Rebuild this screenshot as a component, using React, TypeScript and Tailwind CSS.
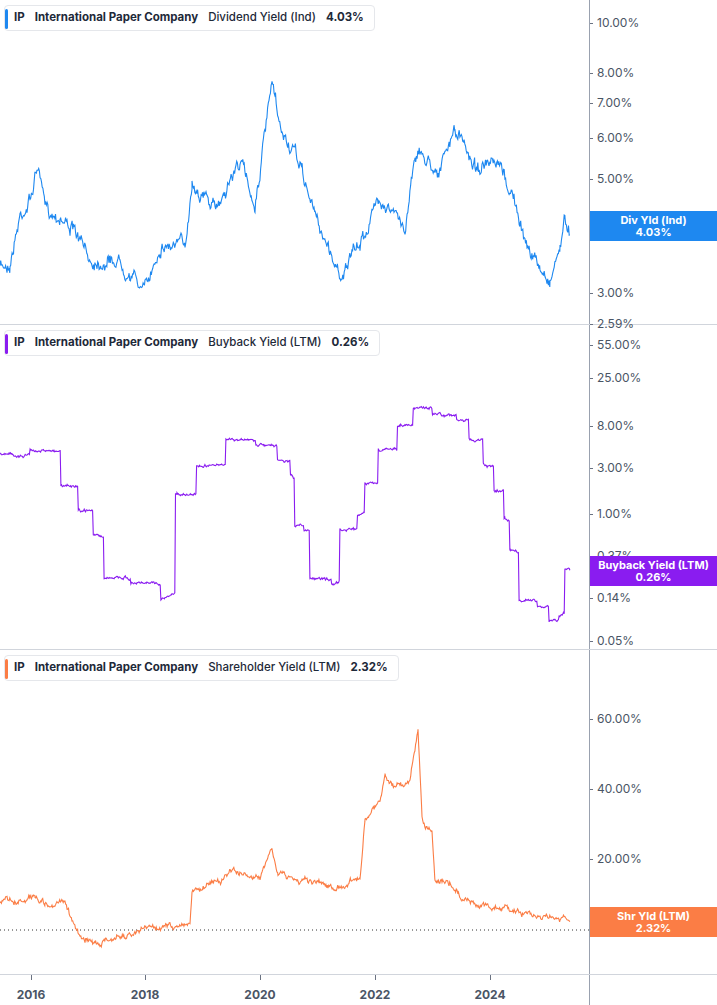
import React from "react";

function rng(seed: number) {
  let s = seed;
  return () => {
    s = (s * 16807) % 2147483647;
    return s / 2147483647;
  };
}

function buildPath(pts: number[][], off: number, noise: number, step: boolean, seed: number) {
  const r = rng(seed);
  const out: string[] = [];
  let first = true;
  let walk = 0;
  for (let i = 0; i < pts.length - 1; i++) {
    const [x0, y0] = pts[i];
    const [x1, y1] = pts[i + 1];
    for (let x = x0; x < x1; x += 0.7) {
      const t = (x - x0) / (x1 - x0);
      let y = step ? (t < 0.85 ? y0 + (y1 - y0) * 0.05 * t : y1) : y0 + (y1 - y0) * t;
      walk = walk * 0.8 + (r() - 0.5) * noise;
      y += walk + (r() - 0.5) * noise * 0.6;
      out.push(`${first ? "M" : "L"}${x.toFixed(1)},${(y - off).toFixed(1)}`);
      first = false;
    }
  }
  return out.join(" ");
}

const p1 = [[0,268],[10,262],[20,215],[30,200],[38,165],[45,210],[60,215],[70,225],[90,260],[120,260],[145,290],[160,245],[185,245],[192,180],[215,210],[240,160],[255,205],[272,85],[280,130],[300,165],[315,215],[340,275],[360,245],[380,195],[405,230],[415,150],[440,170],[455,130],[475,165],[500,170],[515,200],[520,230],[540,270],[550,280],[560,245],[565,220],[570,232]];
const p2 = [[0,455],[35,450],[65,485],[80,510],[95,535],[105,578],[135,582],[165,598],[177,495],[200,465],[230,440],[260,445],[280,460],[292,475],[295,525],[305,530],[310,580],[335,585],[340,530],[360,515],[365,485],[380,450],[400,425],[415,408],[435,415],[460,420],[470,440],[485,465],[495,490],[505,520],[510,550],[520,600],[540,605],[550,620],[560,615],[565,570],[570,572]];
const p3 = [[0,905],[35,895],[45,905],[65,902],[78,935],[95,945],[145,930],[165,928],[190,925],[192,893],[210,885],[235,872],[260,878],[272,850],[278,875],[300,882],[330,887],[360,880],[365,820],[380,800],[385,775],[395,790],[410,780],[418,730],[422,820],[432,832],[435,880],[450,882],[462,898],[480,905],[505,908],[540,915],[560,920],[570,922]];

type Tick = [string, number];

function Panel(props: {
  top: number; h: number; pts: number[][]; color: string; noise: number; step: boolean; seed: number;
  metric: string; value: string; ticks: Tick[]; badge: [string, string]; badgeTop: number; dotted?: number; bar: string;
}) {
  const d = buildPath(props.pts, props.top, props.noise, props.step, props.seed);
  return (
    <div className="flex border-b border-gray-300" style={{ height: props.h }}>
      <div className="relative w-[590px] border-r border-gray-400">
        <div className="absolute left-[4px] top-[5px] flex h-[26px] items-center gap-[10px] rounded border border-gray-200 bg-white pl-[9px] pr-[10px] text-[11.5px] text-gray-800">
          <div className="absolute left-0 top-[3px] h-[20px] w-[3px] rounded" style={{ background: props.bar }} />
          <span className="font-bold">IP</span>
          <span className="font-bold">International Paper Company</span>
          <span className="font-medium">{props.metric}</span>
          <span className="font-bold">{props.value}</span>
        </div>
        <svg width="590" height={props.h} className="block">
          {props.dotted !== undefined && (
            <line x1="0" x2="590" y1={props.dotted} y2={props.dotted} stroke="#333" strokeDasharray="1 3" />
          )}
          <path d={d} fill="none" stroke={props.color} strokeWidth="1.1" />
        </svg>
      </div>
      <div className="relative flex-1 text-[12px] text-gray-600">
        {props.ticks.map(([t, y]) => (
          <div key={t} className="absolute left-0 flex items-center gap-[4px]" style={{ top: y - props.top - 8 }}>
            <div className="h-px w-[3px] bg-gray-500" />
            <span>{t}</span>
          </div>
        ))}
        <div className="absolute left-0 right-0 flex h-[30px] flex-col items-center justify-center text-[11px] font-bold leading-[12px] text-white"
          style={{ top: props.badgeTop - props.top, background: props.color }}>
          <span>{props.badge[0]}</span>
          <span>{props.badge[1]}</span>
        </div>
      </div>
    </div>
  );
}

export default function App() {
  return (
    <div className="h-[1005px] w-[717px] overflow-hidden bg-white" style={{ fontFamily: "Inter, 'Liberation Sans', sans-serif" }}>
      <Panel top={0} h={325} pts={p1} color="#1e88f0" bar="#1e88f0" noise={9} step={false} seed={7}
        metric="Dividend Yield (Ind)" value="4.03%" badge={["Div Yld (Ind)", "4.03%"]} badgeTop={211}
        ticks={[["10.00%",22],["8.00%",72],["7.00%",102],["6.00%",137],["5.00%",178],["4.00%",227],["3.00%",292],["2.59%",323]]} />
      <Panel top={325} h={325} pts={p2} color="#8a1cf0" bar="#8a1cf0" noise={2} step={true} seed={11}
        metric="Buyback Yield (LTM)" value="0.26%" badge={["Buyback Yield (LTM)", "0.26%"]} badgeTop={556}
        ticks={[["55.00%",344],["25.00%",377],["8.00%",425],["3.00%",467],["1.00%",513],["0.37%",555],["0.14%",597],["0.05%",640]]} />
      <Panel top={650} h={325} pts={p3} color="#fb7d45" bar="#fb7d45" noise={4} step={false} seed={3}
        metric="Shareholder Yield (LTM)" value="2.32%" badge={["Shr Yld (LTM)", "2.32%"]} badgeTop={907} dotted={280}
        ticks={[["60.00%",718],["40.00%",788],["20.00%",858],["0.00%",930]]} />
      <div className="flex h-[30px]">
        <div className="relative w-[590px] border-r border-gray-400 text-[12px] font-bold text-gray-600">
          {[["2016",31],["2018",145],["2020",260],["2022",375],["2024",490]].map(([t, x]) => (
            <div key={t as string} className="absolute top-0 flex flex-col items-center" style={{ left: (x as number) - 20, width: 40 }}>
              <div className="h-[5px] w-px bg-gray-500" />
              <span className="mt-[6px]">{t}</span>
            </div>
          ))}
        </div>
      </div>
    </div>
  );
}
